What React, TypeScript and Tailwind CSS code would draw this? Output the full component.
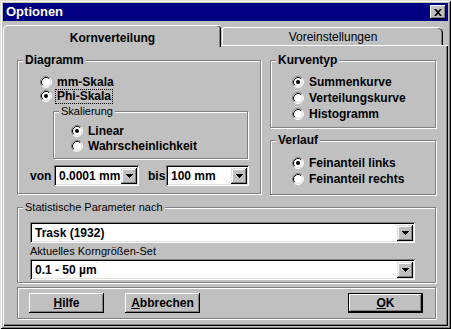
import React from 'react';

const Radio: React.FC<{ label: string; checked?: boolean; focus?: boolean }> = ({ label, checked, focus }) => (
  <div className="flex items-center h-[14px]">
    <svg width="12" height="12" viewBox="0 0 12 12" className="shrink-0">
      <circle cx="6" cy="6" r="5" fill="#fff" />
      <path d="M2.11 9.89A5.5 5.5 0 0 1 9.89 2.11" fill="none" stroke="#808080" strokeWidth="1" />
      <path d="M9.89 2.11A5.5 5.5 0 0 1 2.11 9.89" fill="none" stroke="#fff" strokeWidth="1" />
      <path d="M2.82 9.18A4.5 4.5 0 0 1 9.18 2.82" fill="none" stroke="#000" strokeWidth="1" />
      <path d="M9.18 2.82A4.5 4.5 0 0 1 2.82 9.18" fill="none" stroke="#dfdfdf" strokeWidth="1" />
      {checked && <circle cx="6" cy="6" r="2" fill="#000" />}
    </svg>
    <span
      className={`ml-[4px] px-[1px] text-[12px] leading-[13px] font-bold ${
        focus ? 'outline outline-1 outline-dotted outline-black' : ''
      }`}
    >
      {label}
    </span>
  </div>
);

const GroupBox: React.FC<{ title?: string; bold?: boolean; className?: string; children?: React.ReactNode }> = ({
  title,
  bold,
  className = '',
  children,
}) => (
  <div className={`relative border border-[#808080] shadow-[inset_1px_1px_0_#fff,1px_1px_0_#fff] ${className}`}>
    {title && (
      <span
        className={`absolute -top-[8px] left-[5px] bg-[#c0c0c0] px-[2px] leading-[14px] ${
          bold ? 'font-bold text-[12px]' : 'text-[11px]'
        }`}
      >
        {title}
      </span>
    )}
    {children}
  </div>
);

const Arrow: React.FC = () => (
  <span className="w-[16px] h-[16px] shrink-0 bg-[#c0c0c0] shadow-[inset_-1px_-1px_0_#000,inset_1px_1px_0_#dfdfdf,inset_-2px_-2px_0_#808080,inset_2px_2px_0_#fff] flex items-center justify-center">
    <svg width="7" height="4" viewBox="0 0 7 4">
      <path d="M0 0h7v1H0zM1 1h5v1H1zM2 2h3v1H2zM3 3h1v1H3z" fill="#000" />
    </svg>
  </span>
);

const Combo: React.FC<{ value: string; className?: string }> = ({ value, className = '' }) => (
  <div
    className={`h-[21px] bg-white flex items-center p-[2px] shadow-[inset_1px_1px_0_#808080,inset_-1px_-1px_0_#fff,inset_2px_2px_0_#000,inset_-2px_-2px_0_#dfdfdf] ${className}`}
  >
    <span className="flex-1 pl-[3px] text-[12px] font-bold leading-[14px] whitespace-nowrap overflow-hidden">{value}</span>
    <Arrow />
  </div>
);

const Button: React.FC<{ u: string; rest: string; def?: boolean }> = ({ u, rest, def }) => (
  <div
    className={`w-[75px] h-[20px] flex items-center justify-center text-[12px] font-bold bg-[#c0c0c0] ${
      def
        ? 'border border-black shadow-[inset_-1px_-1px_0_#000,inset_1px_1px_0_#fff,inset_-2px_-2px_0_#808080]'
        : 'shadow-[inset_-1px_-1px_0_#000,inset_1px_1px_0_#fff,inset_-2px_-2px_0_#808080]'
    }`}
  >
    <span>
      <span className="underline">{u}</span>
      {rest}
    </span>
  </div>
);

const App: React.FC = () => {
  return (
    <div className="[font-family:'Liberation_Sans',Arial,sans-serif] w-[451px] h-[329px] bg-[#c0c0c0] text-black p-[3px] flex flex-col shadow-[inset_1px_1px_0_#dfdfdf,inset_-1px_-1px_0_#000,inset_2px_2px_0_#fff,inset_-2px_-2px_0_#808080]">
      {/* title bar */}
      <div className="h-[18px] bg-[#000080] flex items-center justify-between pl-[3px] pr-[2px]">
        <span className="text-white font-bold text-[13px] leading-[16px]">Optionen</span>
        <span className="w-[16px] h-[14px] bg-[#c0c0c0] shadow-[inset_-1px_-1px_0_#000,inset_1px_1px_0_#fff,inset_-2px_-2px_0_#808080] flex items-center justify-center">
          <svg width="8" height="7" viewBox="0 0 8 7">
            <path d="M0 0h2l2 2 2-2h2L5 3.5 8 7H6L4 5 2 7H0l3-3.5z" fill="#000" />
          </svg>
        </span>
      </div>

      {/* tabs */}
      <div className="flex items-end h-[22px] mt-[2px] relative z-10">
        <div className="w-[218px] h-[22px] mb-[-2px] bg-[#c0c0c0] rounded-tl-[5px] rounded-tr-[3px] border-t border-l border-white shadow-[inset_-1px_0_0_#000,inset_-2px_0_0_#808080] flex items-center justify-center pt-[2px]">
          <span className="text-[12px] font-bold">Kornverteilung</span>
        </div>
        <div className="w-[221px] h-[18px] ml-[1px] bg-[#c0c0c0] rounded-tl-[3px] rounded-tr-[5px] border-t border-l border-white shadow-[inset_-1px_0_0_#000,inset_-2px_0_0_#808080] flex items-center justify-center">
          <span className="text-[12px]">Voreinstellungen</span>
        </div>
      </div>

      {/* panel */}
      <div className="flex-1 flex flex-col pt-[14px] pl-[13px] pr-[12px] border-t border-l border-white shadow-[inset_-1px_-1px_0_#000,inset_-2px_-2px_0_#808080]">
        <div className="flex gap-[9px] h-[135px]">
          <GroupBox title="Diagramm" bold className="w-[244px] h-[134px] pt-[14px] pl-[22px]">
            <Radio label="mm-Skala" />
            <Radio label="Phi-Skala" checked focus />
            <GroupBox title="Skalierung" className="mt-[8px] ml-[13px] w-[195px] h-[48px] pt-[12px] pl-[17px]">
              <Radio label="Linear" checked />
              <div className="mt-[1px]">
                <Radio label="Wahrscheinlichkeit" />
              </div>
            </GroupBox>
            <div className="flex items-center mt-[6px] -ml-[10px]">
              <span className="text-[12px] font-bold w-[24px]">von</span>
              <Combo value="0.0001 mm" className="w-[85px]" />
              <span className="text-[12px] font-bold ml-[9px] w-[18px]">bis</span>
              <Combo value="100 mm" className="w-[83px]" />
            </div>
          </GroupBox>
          <div className="flex flex-col">
            <GroupBox title="Kurventyp" bold className="w-[166px] h-[69px] pt-[14px] pl-[21px]">
              <Radio label="Summenkurve" checked />
              <div className="mt-[2px]">
                <Radio label="Verteilungskurve" />
              </div>
              <div className="mt-[2px]">
                <Radio label="Histogramm" />
              </div>
            </GroupBox>
            <GroupBox title="Verlauf" bold className="mt-[12px] w-[166px] h-[55px] pt-[15px] pl-[21px]">
              <Radio label="Feinanteil links" checked />
              <div className="mt-[2px]">
                <Radio label="Feinanteil rechts" />
              </div>
            </GroupBox>
          </div>
        </div>

        <GroupBox title="Statistische Parameter nach" className="mt-[12px] h-[76px] pt-[14px] pl-[12px] pr-[20px]">
          <Combo value="Trask (1932)" />
          <div className="text-[11px] leading-[13px] mt-[2px] mb-[1px]">Aktuelles Korngrößen-Set</div>
          <Combo value="0.1 - 50 µm" />
        </GroupBox>

        <GroupBox className="mt-[4px] h-[32px] flex items-center pl-[11px] pr-[12px]">
          <Button u="H" rest="ilfe" />
          <div className="ml-[21px]">
            <Button u="A" rest="bbrechen" />
          </div>
          <div className="ml-auto">
            <Button u="O" rest="K" def />
          </div>
        </GroupBox>
      </div>
    </div>
  );
};

export default App;
